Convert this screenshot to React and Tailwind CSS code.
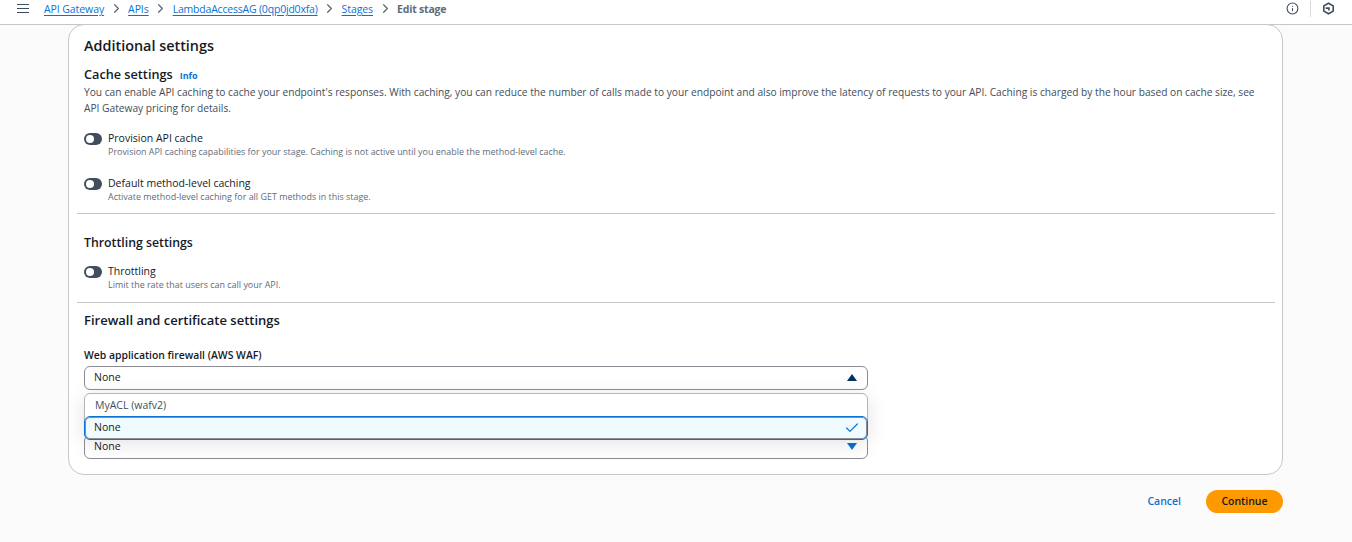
import React from 'react';
import { ChevronRight, Info, Check } from 'lucide-react';

const Crumb = ({ children, tight }) => (
    <>
        <a className={`text-[#0972d3] underline underline-offset-2 decoration-[#0972d3] ${tight ? 'tracking-[-0.2px]' : 'tracking-[-0.08px]'}`}>{children}</a>
        <ChevronRight className="h-[15px] w-[15px] text-[#5f6b7a] mx-[4.5px]" strokeWidth={2} />
    </>
);

const Toggle = ({ label, description }) => (
    <div className="flex items-start">
        <div className="mt-[2px] w-[18px] h-[12px] rounded-full bg-[#414d5c] flex items-center pl-[2px] mr-[6px]">
            <div className="w-[8px] h-[8px] rounded-full bg-white" />
        </div>
        <div>
            <div className="text-[10.5px] leading-[14px] text-[#16191f]">{label}</div>
            <div className="text-[8.95px] leading-[12px] text-[#5f6b7a] mt-[1px]">{description}</div>
        </div>
    </div>
);

const Caret = ({ up, color }) => (
    <svg width="10" height="7" viewBox="0 0 10 7">
        <path d={up ? 'M5 0 L10 7 L0 7 Z' : 'M0 0 L10 0 L5 7 Z'} fill={color} />
    </svg>
);

const App = () => {
    return (
        <div className="w-[1352px] h-[542px] overflow-hidden bg-[#fbfbfb] font-['Open_Sans',sans-serif] flex flex-col">
            {/* Breadcrumb bar */}
            <div className="h-[25px] shrink-0 bg-white border-b border-[#c6c6cd] flex items-center justify-between text-[10.5px] leading-[14px]">
                <div className="flex items-center pl-[17px] pb-[8px] pt-[1px]">
                    <div className="w-[12px] mr-[15px] flex flex-col gap-[2.5px]">
                        <div className="h-[1.5px] bg-[#414d5c]" />
                        <div className="h-[1.5px] bg-[#414d5c]" />
                        <div className="h-[1.5px] bg-[#414d5c]" />
                    </div>
                    <Crumb>API Gateway</Crumb>
                    <Crumb>APIs</Crumb>
                    <Crumb tight>LambdaAccessAG (0qp0jd0xfa)</Crumb>
                    <Crumb>Stages</Crumb>
                    <span className="font-bold text-[#5f6b7a] tracking-[-0.2px]">Edit stage</span>
                </div>
                <div className="flex items-center pr-[17px] pb-[8px] pt-[1px]">
                    <Info className="h-[13px] w-[13px] text-[#414d5c]" strokeWidth={2} />
                    <div className="w-px h-[16px] bg-[#d5dbdb] mx-[11px]" />
                    <svg width="13" height="13" viewBox="0 0 16 16" fill="none" stroke="#414d5c" strokeWidth="2">
                        <path d="M8 1.5 L13.8 4.8 V11.2 L8 14.5 L2.2 11.2 V4.8 Z" />
                        <path d="M4.5 7.5 H8.5 V10.5" />
                    </svg>
                </div>
            </div>

            <div className="pl-[68px] pr-[69px]">
                {/* Card */}
                <div className="relative h-[451px] -mt-px bg-white border border-[#c6c6cd] rounded-[16px] px-[15px] pt-[12px]">
                    <h2 className="text-[14.4px] leading-[18px] font-semibold text-[#16191f]">Additional settings</h2>

                    <div className="mt-[11px] flex items-baseline">
                        <h3 className="text-[12.7px] leading-[16px] font-semibold text-[#16191f]">Cache settings</h3>
                        <span className="ml-[7px] text-[9px] font-bold text-[#0972d3]">Info</span>
                    </div>
                    <p className="mt-[1px] text-[10.2px] leading-[16px] text-[#414d5c] pr-[4px]">
                        You can enable API caching to cache your endpoint's responses. With caching, you can reduce the number of calls made to your endpoint and also improve the latency of requests to your API. Caching is charged by the hour based on cache size, see API Gateway pricing for details.
                    </p>

                    <div className="mt-[15px]">
                        <Toggle label="Provision API cache" description="Provision API caching capabilities for your stage. Caching is not active until you enable the method-level cache." />
                    </div>
                    <div className="mt-[18px]">
                        <Toggle label="Default method-level caching" description="Activate method-level caching for all GET methods in this stage." />
                    </div>

                    <div className="-ml-[7px] -mr-[8px] mt-[10px] border-t border-[#c6c6cd]" />

                    <h3 className="mt-[21px] text-[12.3px] leading-[15px] font-semibold text-[#16191f]">Throttling settings</h3>
                    <div className="mt-[14px]">
                        <Toggle label="Throttling" description="Limit the rate that users can call your API." />
                    </div>

                    <div className="-ml-[7px] -mr-[8px] mt-[11px] border-t border-[#c6c6cd]" />

                    <h3 className="mt-[9px] text-[13px] leading-[16px] font-semibold text-[#16191f]">Firewall and certificate settings</h3>

                    <div className="mt-[21px] text-[10.4px] leading-[13px] font-semibold text-[#16191f]">Web application firewall (AWS WAF)</div>
                    <div className="mt-[4px] w-[784px] h-[24px] bg-white border border-[#8c8c94] rounded-[6px] flex items-center justify-between pl-[9px] pr-[10px] text-[10.5px] text-[#16191f]">
                        None
                        <Caret up color="#033160" />
                    </div>

                    <div className="mt-[45px] w-[784px] h-[24px] bg-white border border-[#8c8c94] rounded-[6px] flex items-center justify-between pl-[9px] pr-[10px] text-[10.5px] text-[#16191f]">
                        None
                        <Caret color="#0972d3" />
                    </div>

                    {/* Open dropdown menu */}
                    <div className="absolute left-[15px] top-[368px] w-[784px] h-[46px] bg-white border border-[#b4b4bb] rounded-[6px] shadow-[0_4px_20px_rgba(0,7,22,0.12)] text-[10.5px] text-[#16191f]">
                        <div className="h-[24px] flex items-center pl-[10px] text-[#414d5c]">MyACL (wafv2)</div>
                        <div className="absolute left-0 right-0 top-[23px] h-[22px] bg-[#f0fbff] border border-[#8c8c94] rounded-[5px] outline-[1.5px] outline-solid outline-[#0972d3] flex items-center justify-between pl-[8px] pr-[6px]">
                            None
                            <Check className="h-[16px] w-[16px] text-[#0972d3]" strokeWidth={1.8} />
                        </div>
                    </div>
                </div>

                {/* Actions */}
                <div className="mt-[15px] flex items-center justify-end">
                    <a className="text-[10.5px] font-semibold text-[#0972d3] mr-[25px]">Cancel</a>
                    <button className="w-[77px] h-[23px] rounded-full bg-[#ff9900] text-[10.5px] font-semibold text-[#16191f]">Continue</button>
                </div>
            </div>
        </div>
    );
};

export default App;
